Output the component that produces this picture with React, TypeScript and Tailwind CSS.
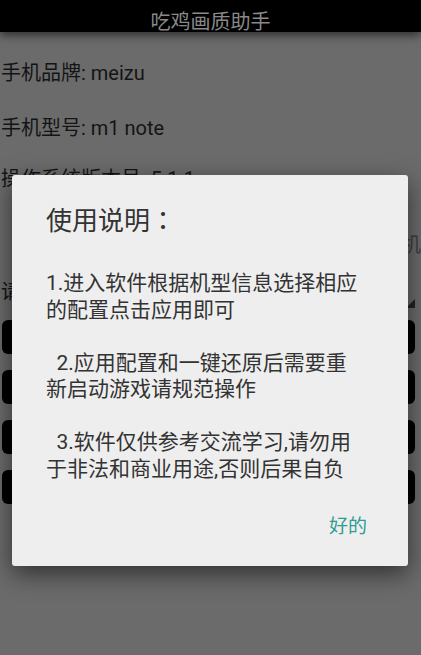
export default function App() {
  const buttons = ["apply", "restore", "launch", "about"];

  return (
    <div className="relative h-[655px] w-full overflow-hidden bg-[#6b6b6b] font-['Roboto','Noto_Sans_CJK_SC',sans-serif]">
      {/* title bar */}
      <header className="relative z-10 h-8 bg-black pt-[12px] text-center text-[20px] leading-[20px] text-[#8a8a8a] shadow-[0_3px_9px_rgba(0,0,0,0.6)]">
        吃鸡画质助手
      </header>

      {/* device info */}
      <div className="flex flex-col pl-[1px] pt-[27px] text-[20px] leading-[28px] text-[#141414]">
        <p>手机品牌: meizu</p>
        <p className="mt-[27px]">手机型号: m1 note</p>
        <p className="mt-[23px]">操作系统版本号: 5.1.1</p>
        <p className="mt-[38px] whitespace-nowrap text-right text-[#3e3e3e] [direction:rtl]">
          适配机
        </p>
        <div className="relative mt-[19px] flex h-[28px] items-center">
          <span>请选</span>
          <svg className="absolute right-[6px] bottom-[-2px]" width="9" height="9" viewBox="0 0 9 9">
            <polygon points="9,0 9,9 0,9" fill="#222" />
          </svg>
        </div>
      </div>

      {/* action buttons (labels hidden behind dialog) */}
      <div className="mt-[14px] flex flex-col gap-[16px] pl-[2px] pr-[6px]">
        {buttons.map((b) => (
          <button key={b} aria-label={b} className="h-[34px] rounded-md bg-black" />
        ))}
      </div>

      {/* dialog */}
      <div className="absolute left-3 top-[175px] h-[391px] w-[396px] rounded-[3px] bg-[#eeeeee] text-[#333] shadow-[0_8px_24px_rgba(0,0,0,0.55)]">
        <h2 className="pl-[34px] pt-[27px] text-[26px] leading-[34px]">
          使用说明<span className="font-['Noto_Sans_CJK_TC',sans-serif]">：</span>
        </h2>
        <div className="mt-[32px] pl-[34px] text-[21px] leading-[26.5px]">
          <p>1.进入软件根据机型信息选择相应</p>
          <p>的配置点击应用即可</p>
          <p className="h-[26.5px]" />
          <p className="whitespace-pre">  2.应用配置和一键还原后需要重</p>
          <p>新启动游戏请规范操作</p>
          <p className="h-[26.5px]" />
          <p className="whitespace-pre">  3.软件仅供参考交流学习,请勿用</p>
          <p>于非法和商业用途,否则后果自负</p>
        </div>
        <div className="mt-[33px] flex justify-end pr-[41px]">
          <button className="text-[19px] leading-[24px] text-[#2e9d93]">好的</button>
        </div>
      </div>
    </div>
  );
}
